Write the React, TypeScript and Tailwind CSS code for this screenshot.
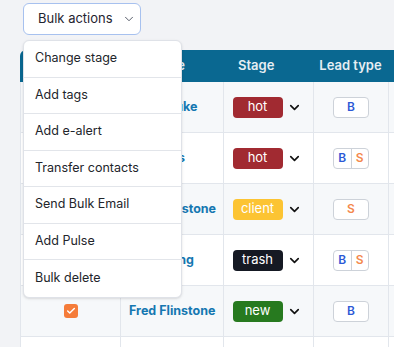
import { ChevronDown, Check } from "lucide-react";

type Stage = "hot" | "client" | "trash" | "new";

interface Row {
  name: string;
  stage: Stage;
  lead: ("B" | "S")[];
  checked: boolean;
}

const rows: Row[] = [
  { name: "Daisy Duke", stage: "hot", lead: ["B"], checked: true },
  { name: "Bo Jones", stage: "hot", lead: ["B", "S"], checked: true },
  { name: "Dino Flinstone", stage: "client", lead: ["S"], checked: true },
  { name: "Tim Young", stage: "trash", lead: ["B", "S"], checked: true },
  { name: "Fred Flinstone", stage: "new", lead: ["B"], checked: true },
  { name: "Barney Rubble", stage: "hot", lead: ["B"], checked: false },
];

const stageClass: Record<Stage, string> = {
  hot: "bg-[#a12a31]",
  client: "bg-[#fcc433]",
  trash: "bg-[#151923]",
  new: "bg-[#277a1f]",
};

const actions = [
  "Change stage",
  "Add tags",
  "Add e-alert",
  "Transfer contacts",
  "Send Bulk Email",
  "Add Pulse",
  "Bulk delete",
];

function LeadBox({ lead }: { lead: ("B" | "S")[] }) {
  return (
    <div className="flex h-[21px] w-[36px] overflow-hidden rounded-[4px] border border-[#cdd2d9] bg-white text-[12px] font-semibold">
      {lead.map((l, i) => (
        <span
          key={l}
          className={`flex flex-1 items-center justify-center ${
            l === "B" ? "text-[#2d59d6]" : "text-[#f4884c]"
          } ${i > 0 ? "border-l border-[#cdd2d9]" : ""}`}
        >
          {l}
        </span>
      ))}
    </div>
  );
}

export default function App() {
  return (
    <div
      className="relative h-[347px] w-[394px] overflow-hidden bg-[#f2f3f6]"
      style={{ fontFamily: "Inter, 'Noto Sans', sans-serif" }}
    >
      <div className="pl-[23px] pt-[3px]">
        <button className="flex h-[32px] w-[118px] items-center gap-[9px] whitespace-nowrap rounded-[6px] border border-[#a7c1ef] bg-white pl-[14px] text-[13px] text-[#1f2430]">
          Bulk actions
          <ChevronDown size={14} strokeWidth={1.6} className="text-[#4b5260]" />
        </button>
      </div>

      <div className="ml-[20px] mt-[15px] w-max">
        <div className="grid grid-cols-[100px_103px_90px_75px_140px] overflow-hidden rounded-tl-[6px] bg-[#0a6891] text-[13px] font-semibold text-[#e6eef3]">
          <div className="h-[32px]" />
          <div className="flex items-center justify-center pr-[10px]">Name</div>
          <div className="flex items-center pl-[15px]">Stage</div>
          <div className="flex items-center justify-center">Lead type</div>
          <div className="flex items-center pl-[12px]">Tags</div>
        </div>
        {rows.map((r, i) => (
          <div
            key={i}
            className={`grid h-[51px] grid-cols-[100px_103px_90px_75px_140px] border-b border-l border-[#e2e6ec] ${
              i % 2 === 0 ? "bg-[#f6f8fa]" : "bg-white"
            }`}
          >
            <div className="flex items-center justify-center border-r border-[#e2e6ec]">
              {r.checked ? (
                <span className="flex h-[14px] w-[14px] items-center justify-center rounded-[3px] bg-[#f57c3a]">
                  <Check size={10} strokeWidth={3.5} className="text-white" />
                </span>
              ) : (
                <span className="h-[14px] w-[14px] rounded-[3px] border border-[#c5cad2] bg-white" />
              )}
            </div>
            <div className="flex items-center whitespace-nowrap border-r border-[#e2e6ec] pl-[8px] text-[12.5px] font-bold text-[#1577b1]">
              {r.name}
            </div>
            <div className="flex items-center justify-center gap-[4px] border-r border-[#e2e6ec] pr-[3px]">
              <span
                className={`flex h-[21px] w-[50px] items-center justify-center rounded-[4px] text-[13px] font-normal text-white ${stageClass[r.stage]}`}
              >
                {r.stage}
              </span>
              <ChevronDown size={15} strokeWidth={2.6} className="text-[#111]" />
            </div>
            <div className="flex items-center justify-center border-r border-[#e2e6ec]">
              <LeadBox lead={r.lead} />
            </div>
            <div />
          </div>
        ))}
      </div>

      <div className="absolute left-[23px] top-[40px] w-[159px] overflow-hidden rounded-[6px] border border-[#dfe2e8] bg-white shadow-sm">
        {actions.map((a, i) => (
          <div
            key={a}
            className={`flex h-[36.5px] items-center pl-[11px] text-[12.5px] text-[#22252b] ${
              i < actions.length - 1 ? "border-b border-[#e2e5ea]" : ""
            }`}
          >
            {a}
          </div>
        ))}
      </div>
    </div>
  );
}
